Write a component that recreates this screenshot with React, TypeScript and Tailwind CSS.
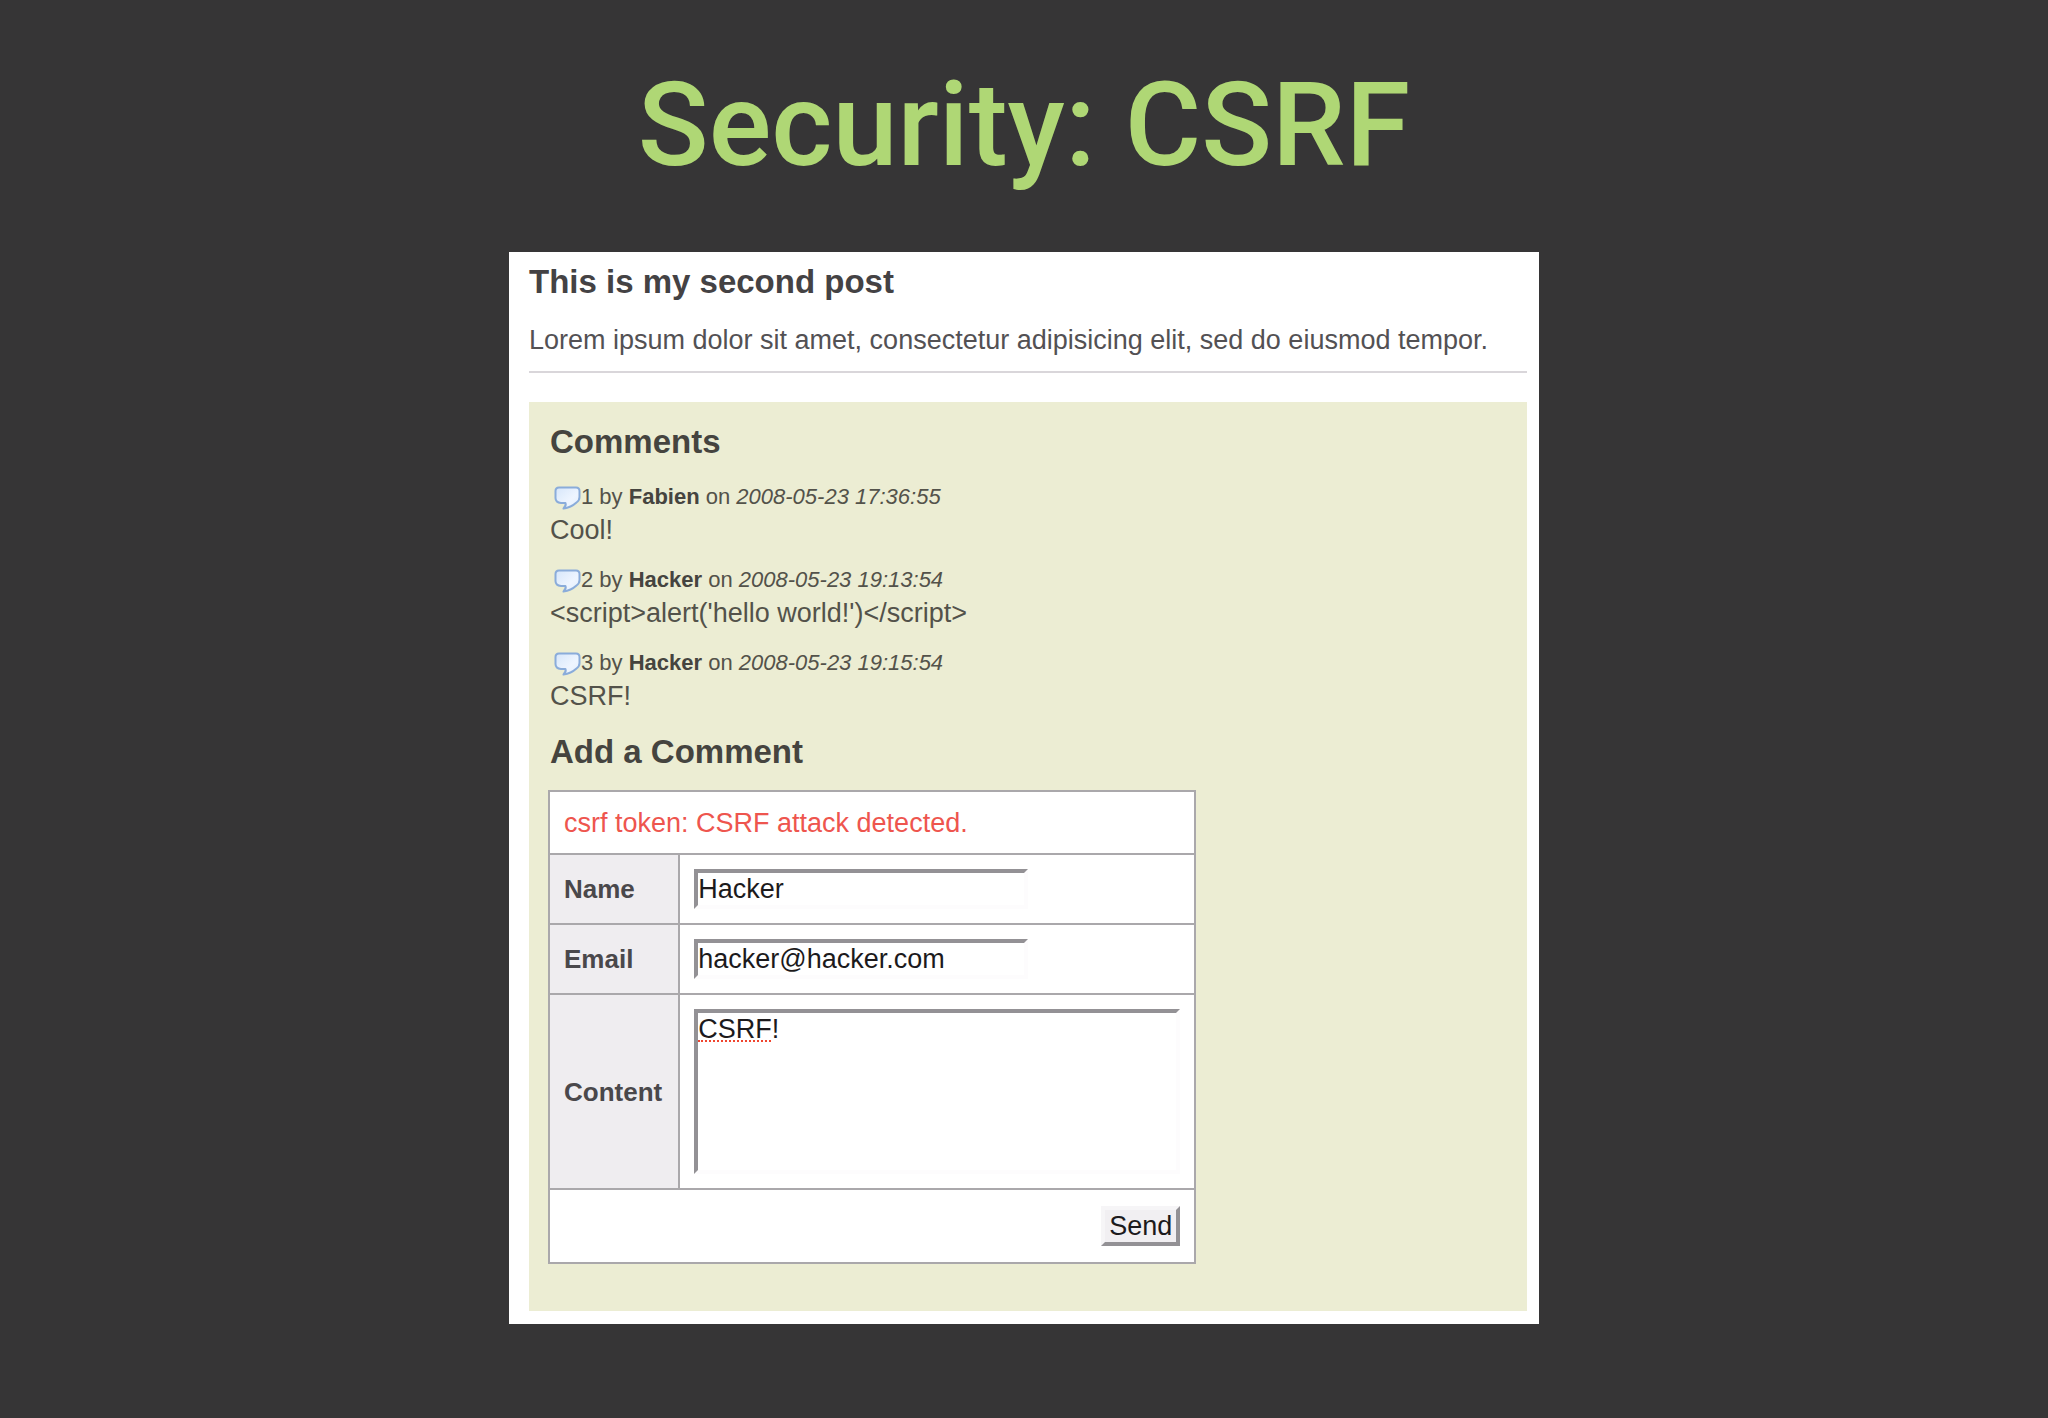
import React, { useState } from "react";

type Comment = {
  id: number;
  author: string;
  date: string;
  body: string;
};

const comments: Comment[] = [
  { id: 1, author: "Fabien", date: "2008-05-23 17:36:55", body: "Cool!" },
  { id: 2, author: "Hacker", date: "2008-05-23 19:13:54", body: "<script>alert('hello world!')</script>" },
  { id: 3, author: "Hacker", date: "2008-05-23 19:15:54", body: "CSRF!" },
];

const inset =
  "block max-w-full border-4 border-t-[#939195] border-l-[#939195] border-r-[#fdfcfd] border-b-[#fdfcfd] bg-white p-0 text-[27px] leading-8 text-[#1c1a1c] outline-none";
const cell = "border-2 border-[#aaa8ab] p-[14px]";
const head =
  "border-2 border-[#aaa8ab] bg-[#efedf0] py-[14px] pr-4 pl-[14px] text-left text-[26px] font-bold text-[#4a484b]";

function CommentIcon() {
  return (
    <svg width="31" height="28" viewBox="0 0 31 28" className="shrink-0" aria-hidden="true">
      <defs>
        <linearGradient id="bubble" x1="0" y1="0" x2="1" y2="1">
          <stop offset="0" stopColor="#d6e6fa" />
          <stop offset="0.6" stopColor="#eef5ff" />
          <stop offset="1" stopColor="#e4effc" />
        </linearGradient>
      </defs>
      <path
        d="M9 4.5H26Q29.5 4.5 29.5 8V14Q29.5 17.5 26.5 19.5Q21 24.5 13.5 25.5Q16.5 22.5 15.5 20H11Q5.5 19.5 5.5 15V8Q5.5 4.5 9 4.5Z"
        fill="url(#bubble)"
        stroke="#8aacda"
        strokeWidth="2"
        strokeLinejoin="round"
      />
    </svg>
  );
}

export default function App() {
  const [name, setName] = useState("Hacker");
  const [email, setEmail] = useState("hacker@hacker.com");
  const [content, setContent] = useState("CSRF!");

  return (
    <div className="min-h-screen bg-[#363536] pt-[55px] pb-12 font-['Liberation_Sans',Arial,sans-serif]">
      <h1 className="mb-[57px] text-center font-[Roboto,sans-serif] text-[117px] leading-[140px] font-medium text-[#afd775]">
        Security: CSRF
      </h1>

      <main className="mx-auto w-full max-w-[1030px] bg-white pt-[10px] pr-3 pb-[13px] pl-5">
        {/* Post */}
        <article className="border-b-2 border-[#d9d6da] pb-[14px]">
          <h2 className="text-[33px] leading-10 font-bold text-[#444244]">This is my second post</h2>
          <p className="mt-[21px] text-[27px] leading-[34px] text-[#535154]">
            Lorem ipsum dolor sit amet, consectetur adipisicing elit, sed do eiusmod tempor.
          </p>
        </article>

        <section className="mt-[29px] bg-[#ecedd3] px-[21px] pt-5 pb-[47px]">
          {/* Comments */}
          <h2 className="text-[33px] leading-10 font-bold text-[#45443f]">Comments</h2>
          <ul className="mt-[19px] space-y-[17px] text-[#53524a]">
            {comments.map((c) => (
              <li key={c.id}>
                <div className="flex items-center text-[22px] leading-8">
                  <CommentIcon />
                  <p>
                    {c.id} by <strong className="text-[#45443f]">{c.author}</strong> on <em>{c.date}</em>
                  </p>
                </div>
                <p className="text-[27px] leading-[34px]">{c.body}</p>
              </li>
            ))}
          </ul>

          {/* Form */}
          <h2 className="mt-[19px] text-[33px] leading-10 font-bold text-[#45443f]">Add a Comment</h2>
          <form onSubmit={(e) => e.preventDefault()} className="-mx-[2px] mt-[18px]">
            <table className="border-collapse bg-white text-[27px] leading-[34px]">
              <tbody>
                <tr>
                  <td colSpan={2} className="border-2 border-[#aaa8ab] px-[14px] pt-[14px] pb-[13px] text-[#ee554e]">
                    csrf token: CSRF attack detected.
                  </td>
                </tr>
                <tr>
                  <th scope="row" className={head}>
                    <label htmlFor="name">Name</label>
                  </th>
                  <td className={cell}>
                    <input
                      id="name"
                      type="text"
                      value={name}
                      onChange={(e) => setName(e.target.value)}
                      className={`${inset} h-10 w-[334px]`}
                    />
                  </td>
                </tr>
                <tr>
                  <th scope="row" className={head}>
                    <label htmlFor="email">Email</label>
                  </th>
                  <td className={cell}>
                    <input
                      id="email"
                      type="text"
                      value={email}
                      onChange={(e) => setEmail(e.target.value)}
                      className={`${inset} h-10 w-[334px]`}
                    />
                  </td>
                </tr>
                <tr>
                  <th scope="row" className={head}>
                    <label htmlFor="content">Content</label>
                  </th>
                  <td className={cell}>
                    <div className="relative">
                      <textarea
                        id="content"
                        value={content}
                        spellCheck={false}
                        onChange={(e) => setContent(e.target.value)}
                        className={`${inset} h-[165px] w-[486px] resize-none`}
                      />
                      {/* spelling mark under the unknown word */}
                      {content.startsWith("CSRF") && (
                        <span className="pointer-events-none absolute top-[31px] left-1 w-[73px] border-b-2 border-dotted border-[#f0452f]" />
                      )}
                    </div>
                  </td>
                </tr>
                <tr>
                  <td colSpan={2} className="border-2 border-[#aaa8ab] px-[14px] py-4">
                    <button
                      type="submit"
                      className="ml-auto block border-4 border-t-[#f6f5f7] border-r-[#939195] border-b-[#939195] border-l-[#f6f5f7] bg-[#f1eff2] px-1 text-[27px] leading-8 text-[#1c1a1c]"
                    >
                      Send
                    </button>
                  </td>
                </tr>
              </tbody>
            </table>
          </form>
        </section>
      </main>
    </div>
  );
}
